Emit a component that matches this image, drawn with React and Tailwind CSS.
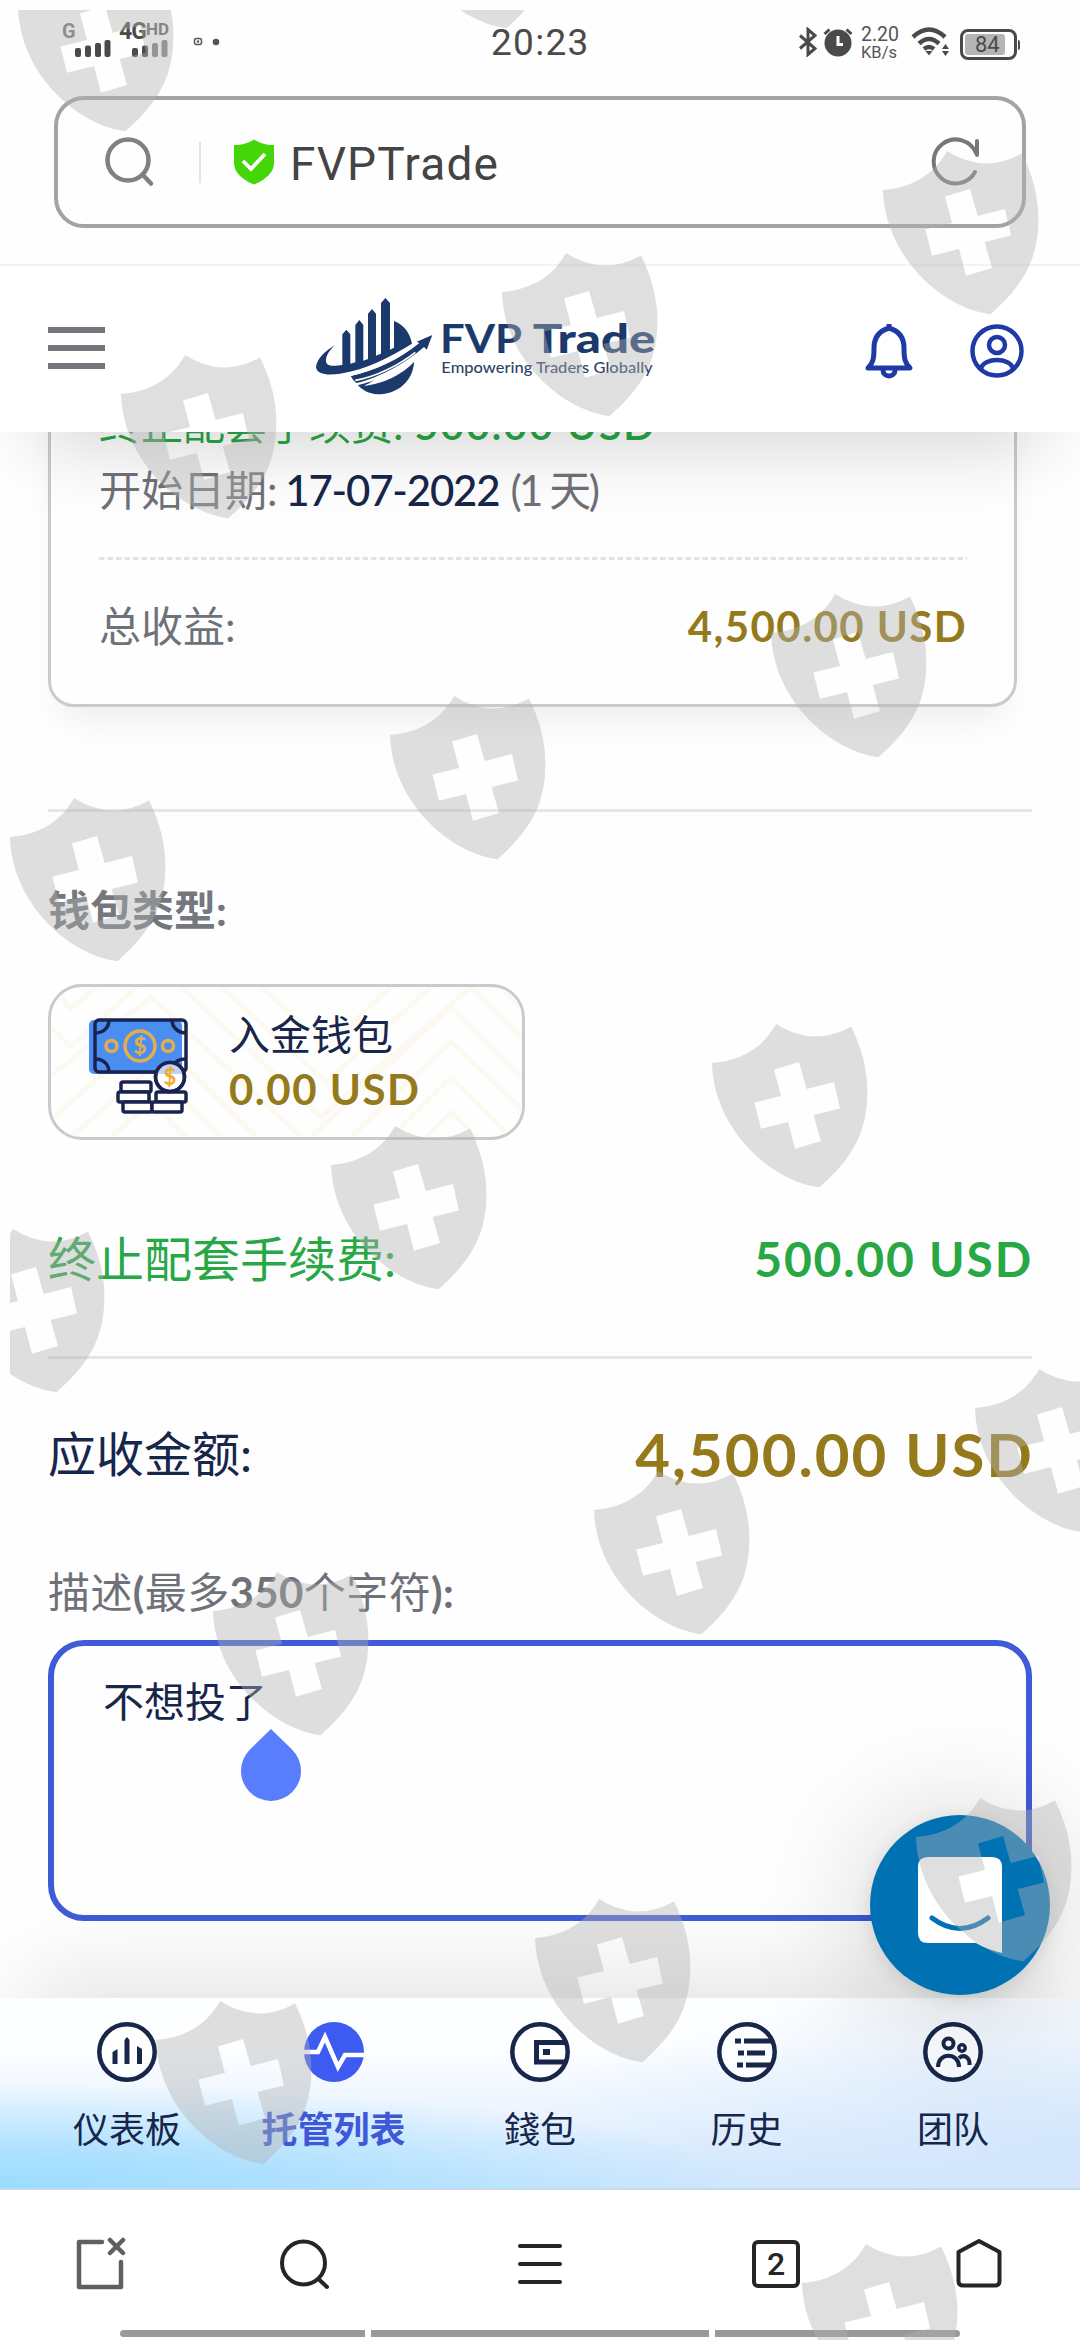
import React from 'react';

const navItems = [
  { key: 'dashboard', label: '仪表板' },
  { key: 'custody', label: '托管列表', active: true },
  { key: 'wallet', label: '錢包' },
  { key: 'history', label: '历史' },
  { key: 'team', label: '团队' },
];

// top-left corner of every watermark shield
const shields = [
  [18, -32], [399, -135], [883, 151], [502, 253], [121, 355], [771, 594],
  [390, 696], [10, 798], [712, 1024], [331, 1126], [-51, 1229], [975, 1369],
  [594, 1471], [213, 1572], [916, 1798], [535, 1899], [156, 2001], [802, 2244],
];

function Watermark() {
  return (
    <svg className="pointer-events-none absolute inset-0 z-40" width="1080" height="2340" viewBox="0 0 1080 2340">
      <defs>
        <clipPath id="wm-clip">
          <rect x="10" y="10" width="1070" height="2330" />
        </clipPath>
        <path
          id="wm-shield"
          fillRule="evenodd"
          d="M0 39C22 37 48 29 64 0Q101 23.6 139 2.4C150 24 156 48 155.3 70C155 112 137 137 107.5 163.2C62 158 2 108 0 39ZM62 45.5L69 72L42.4 78.5L49 104.7L76 98L83 124.7L109 117L101.6 91L128 84.4L122 58L94.7 65L87 38Z"
        />
      </defs>
      <g clipPath="url(#wm-clip)" fill="#b2b2b2" fillOpacity="0.415">
        {shields.map(([x, y]) => (
          <use key={`${x}-${y}`} href="#wm-shield" x={x} y={y} />
        ))}
      </g>
    </svg>
  );
}

function SignalBars({ faded }) {
  return (
    <svg width="36" height="17" viewBox="0 0 36 17" fill="#4a4a4a">
      <rect x="0" y="8" width="6" height="9" rx="2" />
      <rect x="10" y="5.5" width="6" height="11.5" rx="2" />
      <rect x="20" y="3" width="6" height="14" rx="2" opacity={faded ? 0.7 : 1} />
      <rect x="29.500" y="0" width="6" height="17" rx="2" opacity={faded ? 0.7 : 1} />
    </svg>
  );
}

function StatusBar() {
  return (
    <div className="flex h-[96px] items-start pr-[60px] pl-[62px] pt-[22px] font-['Roboto',sans-serif] text-[#4a4a4a]">
      <div className="flex w-[429px] shrink-0">
        <div className="w-[57px] text-[20px] leading-[19px] font-bold text-[#777]">
          <div>G</div>
          <div className="-mt-px pl-[13px]"><SignalBars /></div>
        </div>
        <div className="w-[74px] text-[23px] leading-[19px] font-bold">
          <div className="flex items-start tracking-[-1px]">
            4G<span className="text-[17px] leading-[15px] tracking-normal text-[#666]">HD</span>
          </div>
          <div className="-mt-px pl-[13px]"><SignalBars faded /></div>
        </div>
        <svg className="mt-[14px]" width="30" height="12" viewBox="0 0 30 12">
          <rect x="1.500" y="2.500" width="7" height="6" rx="2" fill="none" stroke="#555" strokeWidth="1.500" />
          <circle cx="5" cy="5.500" r="1.200" fill="#555" />
          <circle cx="23" cy="6" r="3.300" fill="#555" />
        </svg>
      </div>
      <div className="pt-px text-[37px] leading-[40px] tracking-[1.3px]">20:23</div>
      <div className="flex flex-1 justify-end pt-[5px]">
        <svg width="18" height="30" viewBox="0 0 18 30" fill="none" stroke="#4a4a4a" strokeWidth="3">
          <path d="M1 8.500L16 21.500L9 27.500V2.500L16 8.500L1 21.500" />
        </svg>
        <svg className="ml-[6px]" width="30" height="30" viewBox="0 0 30 30">
          <circle cx="15" cy="16" r="13.500" fill="#4a4a4a" />
          <path d="M1.500 7L6.500 2.500M28.500 7L23.500 2.500" stroke="#4a4a4a" strokeWidth="3" />
          <path d="M15 9V17.500H20" fill="none" stroke="#fff" strokeWidth="3" />
        </svg>
        <div className="-mt-[1px] ml-[8px] w-[40px] text-[#555]">
          <div className="text-[19.500px] leading-[18px]">2.20</div>
          <div className="text-[16.500px] leading-[18px]">KB/s</div>
        </div>
        <svg className="ml-[10px]" width="40" height="30" viewBox="0 0 40 30" fill="none" stroke="#4a4a4a" strokeWidth="4.500">
          <path d="M2 10Q18 -5 34 10" />
          <path d="M8 16.500Q18 7.500 28 16.500" />
          <path d="M13 22Q18 18 23 22" />
          <path d="M14.500 24L18 28.500L21.500 24Z" fill="#4a4a4a" stroke="none" />
          <path d="M31 22L34.500 17L38 22ZM31 24L34.500 29L38 24Z" fill="#4a4a4a" stroke="none" />
        </svg>
        <div className="ml-[9px] flex items-center">
          <div className="h-[31px] w-[57px] rounded-[8px] border-[3px] border-[#4a4a4a] p-[2px]">
            <div className="relative h-full w-[40px] rounded-[3px] bg-[#b5b5b5]">
              <span className="absolute top-0 left-[10px] text-[22px] leading-[22px]">84</span>
            </div>
          </div>
          <div className="ml-px h-[10px] w-[2px] rounded-r bg-[#4a4a4a]" />
        </div>
      </div>
    </div>
  );
}

function AddressBar() {
  return (
    <div className="mx-[54px] flex h-[132px] items-center rounded-[30px] border-[4px] border-[#a3a3a3] pr-[40px] pl-[47px]">
      <svg width="52" height="52" viewBox="0 0 52 52" fill="none" stroke="#808080" strokeWidth="4.500">
        <circle cx="23" cy="24" r="20.500" />
        <path d="M37.500 38.500L46 47.500" strokeLinecap="round" />
      </svg>
      <div className="ml-[42px] h-[41px] w-[2px] bg-[#e4e4e4]" />
      <svg className="ml-[32px]" width="42" height="46" viewBox="0 0 42 46">
        <path d="M21 0.500C26 4 33 6 41 6V24C41 34 32 41 21 45.500C10 41 1 34 1 24V6C9 6 16 4 21 0.500Z" fill="#45d60a" />
        <path d="M10 22L18 30L32 15" fill="none" stroke="#fff" strokeWidth="3.800" />
      </svg>
      <div className="ml-[15px] flex-1 pt-[4px] font-['Roboto',sans-serif] text-[46px] leading-[54px] tracking-[1.2px] text-[#444]">FVPTrade</div>
      <svg width="52" height="52" viewBox="0 0 52 52" fill="none" stroke="#777" strokeWidth="4" strokeLinecap="round">
        <path d="M45 36A22 22 0 1 1 46 17M47 5V19" />
      </svg>
    </div>
  );
}

function Logo() {
  return (
    <svg className="-mt-[6px]" width="342" height="99" viewBox="75 50 1026 297">
      <g fill="#1b3a6b">
        <path d="M136 194C108 210 80 235 78 260C80 282 112 286 150 280C230 268 300 230 366 190C360 160 345 135 312 122V202L300 208V68L286 53L273 68V220L258 226V100L246 86L234 100V236L220 241V134L208 119L196 134V246L181 250V162L169 148L157 162V254C130 258 112 258 108 244C106 226 120 208 136 194Z" />
        <path d="M182 286C260 270 330 236 388 188L380 184L427 164L410 208L402 200C350 246 270 292 200 308C192 302 186 294 182 286Z" />
        <path d="M204 314C224 310 236 306 252 300C240 308 232 312 222 316C280 312 340 280 372 244C370 300 325 342 262 342C238 340 216 330 204 314Z" />
      </g>
      <path d="M178 284C250 268 320 234 372 192" fill="none" stroke="#fff" strokeWidth="7" />
      <path d="M150 292C230 278 300 244 364 202" fill="none" stroke="#fff" strokeWidth="4" />
      <path d="M196 300C260 290 330 252 376 216" fill="none" stroke="#fff" strokeWidth="5" />
      <text x="450" y="219" fill="#1b3a6b" fontFamily="Lato, sans-serif" fontWeight="700" fontSize="120" textLength="246" lengthAdjust="spacingAndGlyphs">FVP</text>
      <text x="728" y="219" fill="#1b3a6b" fontFamily="Lato, sans-serif" fontWeight="900" fontSize="120" textLength="368" lengthAdjust="spacingAndGlyphs">Trade</text>
      <text x="454" y="278" fill="#2d4466" fontFamily="Lato, sans-serif" fontWeight="500" fontSize="46" textLength="634" lengthAdjust="spacingAndGlyphs">Empowering Traders Globally</text>
    </svg>
  );
}

function SiteHeader() {
  return (
    <header className="relative z-10 flex h-[168px] items-center border-t-2 border-[#f3f3f3] bg-white pr-[55px] pl-[48px] shadow-[0_50px_80px_-40px_rgba(0,0,0,0.18)]">
      <div className="-mt-[2px] flex w-[57px] flex-col gap-[12px]">
        <div className="h-[6px] bg-[#74747b]" />
        <div className="h-[6px] bg-[#74747b]" />
        <div className="h-[6px] bg-[#74747b]" />
      </div>
      <div className="ml-[210px] flex-1"><Logo /></div>
      <svg className="mt-[3px]" width="52" height="56" viewBox="0 0 52 56" fill="none" stroke="#1f3aa6" strokeWidth="5">
        <path d="M5 45C10 40 11 36 11 25C11 14 16 8 26 5C36 8 41 14 41 25C41 36 42 40 47 45Z" strokeLinejoin="round" />
        <path d="M20 47C20 55 32 55 32 47" />
        <path d="M26 1V6" />
      </svg>
      <svg className="mt-[3px] ml-[54px]" width="56" height="56" viewBox="0 0 56 56" fill="none" stroke="#1f3aa6" strokeWidth="4.500">
        <circle cx="28" cy="28" r="24.500" />
        <circle cx="28" cy="22" r="8" />
        <path d="M12 46C14 34 42 34 44 46" />
      </svg>
    </header>
  );
}

function PackageCard() {
  return (
    <section className="-mt-[80px] h-[355px] w-[969px] shrink-0 rounded-[26px] border-[3px] border-[#c9cacf] px-[48px] pt-[36px] text-[42px] leading-[66px] text-[#6e7278] shadow-[0_24px_36px_-14px_rgba(0,0,0,0.08)]">
      <div className="text-[#28a745]">
        终止配套手续费: <span className="font-semibold tracking-[1.4px]">500.00 USD</span>
      </div>
      <div>
        开始日期: <span className="-ml-[3px] font-medium tracking-[-1.2px] text-[#17264a]">17-07-2022</span>
        <span className="ml-[11px] tracking-[-2.5px]">(1 天)</span>
      </div>
      <svg className="mt-[34px] block" width="868" height="3" viewBox="0 0 868 3">
        <path d="M0 1.500H868" stroke="#e2e2e2" strokeWidth="3" strokeDasharray="5.500 3" />
      </svg>
      <div className="mt-[33px] flex justify-between">
        <span>总收益:</span>
        <span className="-mr-px font-bold tracking-[1.4px] text-[#957a1c]">4,500.00 USD</span>
      </div>
    </section>
  );
}

function MoneyIcon() {
  return (
    <svg width="100" height="96" viewBox="0 0 100 96" fill="none" stroke="#1a2350" strokeWidth="3.500">
      <rect x="0" y="2" width="93" height="54" rx="5" fill="#4b8ef2" stroke="none" />
      <rect x="6" y="2" width="91" height="52" rx="4" />
      <path d="M6 15C15 15 20 9 20 2M83 2C83 9 89 15 97 15M6 41C15 41 20 47 20 54M97 41C91 41 86 43 84 48" />
      <circle cx="51" cy="28" r="15" stroke="#e3ad4c" />
      <circle cx="22.500" cy="28" r="5.500" stroke="#e3ad4c" />
      <circle cx="79" cy="28" r="5.500" stroke="#e3ad4c" />
      <text x="51" y="36" textAnchor="middle" fontSize="23" fontWeight="700" fontFamily="Lato, sans-serif" fill="#e3ad4c" stroke="none">$</text>
      <rect x="32" y="64" width="30" height="10" rx="2" fill="#fff" />
      <rect x="29" y="74" width="31" height="10" rx="2" fill="#fff" />
      <rect x="67" y="74" width="30" height="10" rx="2" fill="#fff" />
      <rect x="34" y="84" width="29" height="10" rx="2" fill="#fff" />
      <rect x="63" y="84" width="30" height="10" rx="2" fill="#fff" />
      <circle cx="81" cy="59" r="14.500" fill="#fff" />
      <path d="M67 56C68 47 75 44 81 44.500C89 45 94 50 95 56Z" fill="#bcd6fa" stroke="none" />
      <circle cx="81" cy="59" r="14.500" />
      <text x="81" y="67" textAnchor="middle" fontSize="22" fontWeight="700" fontFamily="Lato, sans-serif" fill="#f5ab27" stroke="none">$</text>
    </svg>
  );
}

function WalletCard() {
  return (
    <div className="relative mt-[43px] flex h-[156px] w-[477px] shrink-0 items-center overflow-hidden rounded-[34px] border-[3px] border-[#c9cacd] pl-[38px]">
      <svg className="absolute inset-0" width="471" height="150" viewBox="0 0 471 150" fill="none" stroke="#fcfaf0" strokeWidth="5">
        <path d="M-40 120L100 10L250 150M-20 150L100 45L205 150M20 150L100 80L170 150M60 150L100 115L135 150" />
        <path d="M130 0L270 130L420 0M170 0L275 95L380 0M210 0L275 60L340 0" />
        <path d="M260 150L400 20L530 150M300 150L400 55L500 150M340 150L400 90L460 150M375 150L400 125L425 150" />
        <path d="M-40 0L20 60L85 0M0 0L20 22L45 0M420 0L480 60M450 0L490 40" />
      </svg>
      <div className="relative pt-[7px]"><MoneyIcon /></div>
      <div className="relative ml-[40px] text-[41px] leading-[54px]">
        <div className="text-[#17264a]">入金钱包</div>
        <div className="text-[42px] font-bold tracking-[1.5px] text-[#957a1c]">0.00 USD</div>
      </div>
    </div>
  );
}

function NavIcon({ name }) {
  if (name === 'custody') {
    return (
      <svg width="60" height="60" viewBox="0 0 60 60">
        <circle cx="30" cy="30" r="30" fill="#3d5af1" />
        <path d="M0 30H14L21 15L34 45L41 33H60" fill="none" stroke="#fff" strokeWidth="4.500" />
      </svg>
    );
  }
  return (
    <svg width="60" height="60" viewBox="0 0 60 60" fill="none" stroke="#17264a" strokeWidth="4.500">
      <circle cx="30" cy="30" r="27.700" fill="#fff" fillOpacity="0.7" />
      {name === 'dashboard' && (
        <path d="M15.500 42V30L20.500 27V42ZM27.500 42V18L30 15L32.500 18V42ZM40 42V24L45 27V42Z" fill="#17264a" stroke="none" />
      )}
      {name === 'wallet' && (
        <>
          <path d="M56 20.500H26.500V40H56" strokeWidth="5" />
          <rect x="33" y="27" width="7" height="6" fill="#17264a" stroke="none" />
        </>
      )}
      {name === 'history' && (
        <path d="M18 19H24M27 19H55M21 31H27M30 31H48M20 43H26M29 43H54" strokeWidth="5" />
      )}
      {name === 'team' && (
        <>
          <circle cx="25.500" cy="21.500" r="5" strokeWidth="4" />
          <circle cx="39" cy="26" r="3.200" strokeWidth="3.500" />
          <path d="M15 45C15 30 36 30 36 45" strokeWidth="4" />
          <path d="M36 36C41 32 47 35 46.500 43" strokeWidth="4" />
        </>
      )}
    </svg>
  );
}

function BottomNav() {
  return (
    <nav className="relative z-10 flex h-[192px] shrink-0 justify-center border-b-2 border-[#c8dbea] bg-white bg-[radial-gradient(ellipse_760px_105px_at_0%_100%,#9adcff,#9adcff99_45%,transparent),radial-gradient(ellipse_560px_190px_at_100%_85%,#d3e6fb,#d3e6fb66_60%,transparent),linear-gradient(to_bottom,#fdfeff_25%,#e9f3ff_65%,#cfe7ff)] pt-[24px] shadow-[0_-50px_90px_-30px_rgba(0,0,0,0.11)]">
      {navItems.map((item) => (
        <div key={item.key} className="flex w-[206.500px] flex-col items-center">
          <NavIcon name={item.key} />
          <span
            className={
              item.active
                ? 'mt-[21px] text-[36px] leading-[52px] font-bold text-[#3f58d8]'
                : 'mt-[21px] text-[36px] leading-[52px] text-[#17264a]'
            }
          >
            {item.label}
          </span>
        </div>
      ))}
    </nav>
  );
}

function ChatButton() {
  return (
    <button className="absolute top-[1815px] left-[870px] z-30 flex size-[180px] items-center justify-center rounded-full bg-[#0072b4] shadow-[0_4px_18px_rgba(0,0,0,0.1),0_6px_130px_rgba(0,0,0,0.2)]">
      <svg width="84" height="96" viewBox="0 0 84 96">
        <path d="M10 0H74Q84 0 84 10V96Q68 92 58 86H10Q0 86 0 76V10Q0 0 10 0Z" fill="#fff" />
        <path d="M14 61Q42 82 70 61" fill="none" stroke="#0072b4" strokeWidth="5" strokeLinecap="round" />
      </svg>
    </button>
  );
}

function BrowserBar() {
  return (
    <footer className="relative z-10 h-[150px] shrink-0 bg-white">
      <div className="flex h-[140px] items-center pl-[75px] pt-[8px]">
        <svg width="54" height="56" viewBox="0 0 54 56" fill="none" stroke="#606060" strokeWidth="4.500" strokeLinecap="round">
          <path d="M27 6H4V51H46V26M35 4L48 17M48 4L35 17" strokeLinejoin="round" />
        </svg>
        <svg className="ml-[151px]" width="50" height="52" viewBox="0 0 50 52" fill="none" stroke="#252525" strokeWidth="4" strokeLinecap="round">
          <circle cx="23.500" cy="25" r="21.500" />
          <path d="M38.500 41L47 49" />
        </svg>
        <svg className="ml-[188px]" width="44" height="44" viewBox="0 0 44 44" stroke="#252525" strokeWidth="4" strokeLinecap="round">
          <path d="M2 4H42M2 22H42M2 40H42" />
        </svg>
        <div className="ml-[190px] flex size-[48px] items-center justify-center rounded-[6px] border-4 border-[#252525] font-['Roboto',sans-serif] text-[32px] font-medium text-[#252525]">
          2
        </div>
        <svg className="-mt-[3px] ml-[156px]" width="46" height="50" viewBox="0 0 46 50" fill="none" stroke="#252525" strokeWidth="4" strokeLinejoin="round">
          <path d="M23 3L43.500 14V43Q43.500 47.500 39 47.500H7Q2.500 47.500 2.500 43V14Z" />
        </svg>
      </div>
      <div className="flex h-[7px] gap-[6px] pl-[120px]">
        <div className="w-[245px] rounded-l-full bg-[#999]" />
        <div className="w-[338px] bg-[#999]" />
        <div className="w-[245px] rounded-r-full bg-[#999]" />
      </div>
    </footer>
  );
}

function App() {
  return (
    <div className="relative flex h-[2340px] w-[1080px] flex-col overflow-hidden bg-[#fefefe] font-['Lato','Noto_Sans_CJK_SC',sans-serif]">
      <StatusBar />
      <AddressBar />
      <div className="h-[36px]" />
      <SiteHeader />

      <main className="flex h-[1566px] shrink-0 flex-col px-[48px]">
        <PackageCard />
        <div className="mt-[102px] h-[3px] shrink-0 bg-[#e6e6e6]" />
        <div className="mt-[67px] text-[42px] leading-[62px] font-bold text-[#74787e]">钱包类型:</div>
        <WalletCard />

        <div className="mt-[83px] flex h-[72px] items-center justify-between text-[48px] leading-[72px] text-[#28a745]">
          <span>终止配套手续费:</span>
          <span className="-mr-px font-bold tracking-[1.8px]">500.00 USD</span>
        </div>
        <div className="mt-[61px] h-[3px] shrink-0 bg-[#e6e6e6]" />

        <div className="mt-[50px] flex h-[90px] items-center justify-between text-[#17264a]">
          <span className="text-[48px] leading-[72px]">应收金额:</span>
          <span className="-mr-[2px] text-[60px] leading-[90px] font-bold tracking-[2px] text-[#957a1c]">4,500.00 USD</span>
        </div>

        <div className="mt-[62px] text-[42px] leading-[62px] tracking-[0.4px] text-[#6e7278]">
          描述<b>(</b>最多<b>350</b>个字符<b>):</b>
        </div>
        <div className="relative mt-[17px] h-[281px] shrink-0 rounded-[36px] border-[6px] border-[#3f5bd6] px-[49px] pt-[26px] text-[41px] leading-[60px] text-[#17264a]">
          不想投了
          <svg className="absolute top-[83px] left-[187px]" width="60" height="74" viewBox="0 0 60 74">
            <path d="M30 0L51 20.500A30 30 0 1 1 9 20.500Z" fill="#587dfd" />
          </svg>
        </div>
      </main>

      <BottomNav />
      <BrowserBar />
      <ChatButton />
      <Watermark />
    </div>
  );
}

export default App;
